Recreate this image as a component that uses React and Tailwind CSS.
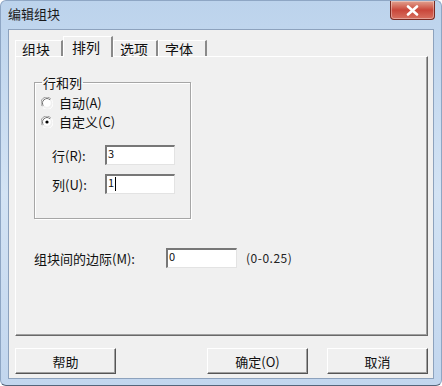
import React from 'react';

const font = { fontFamily: '"Noto Sans CJK SC", "Liberation Sans", sans-serif' };

const Radio = ({ checked }) => (
  <svg width="12" height="12" viewBox="0 0 12 12" className="shrink-0">
    <path d="M10 2.2 A5.5 5.5 0 0 0 1.2 9.2" fill="none" stroke="#a0a0a0" strokeWidth="1" />
    <path d="M9 2.8 A4.5 4.5 0 0 0 2.2 8.6" fill="none" stroke="#696969" strokeWidth="1" />
    <path d="M10.4 2.6 A5.5 5.5 0 0 1 2 10.6" fill="none" stroke="#ffffff" strokeWidth="1" />
    <circle cx="6" cy="6" r="3.8" fill="#ffffff" />
    {checked && <circle cx="6" cy="6" r="1.6" fill="#000000" />}
  </svg>
);

const Field = ({ value, caret, className }) => (
  <div
    className={
      'h-[20px] bg-white border-t-2 border-l-2 border-t-[#777] border-l-[#777] border-b border-r border-b-[#e3e3e3] border-r-[#e3e3e3] text-[11px] leading-none pl-[1px] pt-[1px] flex items-start ' +
      className
    }
  >
    <span>{value}</span>
    {caret && <span className="w-px h-[14px] bg-black ml-px" />}
  </div>
);

const Button = ({ children, className }) => (
  <button
    className={
      'h-[26px] w-[101px] bg-[#f0f0f0] border border-t-white border-l-white border-b-[#555] border-r-[#555] shadow-[inset_-1px_-1px_0_#a0a0a0] text-[13px] leading-none text-[#111] ' +
      (className || '')
    }
  >
    {children}
  </button>
);

const Tab = ({ label, active, className }) => (
  <div
    className={
      'flex items-center border-t border-l border-t-white border-l-white border-r-2 border-r-[#8a8a8a] bg-[#f0f0f0] text-[14px] leading-none text-[#111] ' +
      (active ? 'h-[21px] -mb-px z-10 pl-[8px] ' : 'h-[16px] pl-[6px] ') +
      (className || '')
    }
  >
    {label}
  </div>
);

export default function App() {
  return (
    <div
      className="w-[442px] h-[386px] flex flex-col bg-gradient-to-b from-[#bcd3ec] via-[#d3e3f4] to-[#c2d6ee] rounded-[6px] border border-[#8ea6c4] border-b-[#55657a] overflow-hidden"
      style={font}
    >
      {/* title bar */}
      <div className="h-[28px] flex items-start shrink-0">
        <div className="pl-[7px] pt-[6px] text-[13px] leading-none text-[#1a1a1a]">编辑组块</div>
        <div className="flex-1" />
        <div className="mr-[6px] w-[45px] h-[19px] rounded-b-[4px] border border-t-0 border-[#7a2a22] bg-gradient-to-b from-[#e0a090] via-[#c9463a] to-[#d87060] flex items-center justify-center shadow-[inset_0_0_0_1px_rgba(255,255,255,0.35)]">
          <svg width="13" height="11" viewBox="0 0 13 11">
            <path d="M2 1.5 L11 9.5 M11 1.5 L2 9.5" stroke="#ffffff" strokeWidth="2.6" strokeLinecap="round" />
          </svg>
        </div>
      </div>

      {/* client area */}
      <div className="flex-1 mx-[7px] mb-[6px] bg-[#f0f0f0] border border-[#8da2bd] flex flex-col">
        {/* tabs */}
        <div className="flex items-end h-[26px] pl-[6px] pt-[6px]">
          <Tab label="组块" className="w-[48px]" />
          <Tab label="排列" active className="w-[50px]" />
          <Tab label="选项" className="w-[45px]" />
          <Tab label="字体" className="w-[49px]" />
        </div>

        {/* panel */}
        <div className="ml-[6px] mr-[5px] h-[280px] border border-t-white border-l-white border-b-[#696969] border-r-[#696969] shadow-[inset_-1px_-1px_0_#a0a0a0] flex flex-col pl-[18px] pt-[19px] text-[13px] text-[#111]">
          <fieldset className="w-[157px] h-[143px] border border-[#a6a6a6] shadow-[1px_1px_0_white,inset_1px_1px_0_white] px-[6px]">
            <legend className="px-[1px] ml-[1px] leading-none text-[13px]">行和列</legend>
            <div className="flex items-center gap-[6px] mt-[7px] leading-none">
              <Radio />
              <span>自动(A)</span>
            </div>
            <div className="flex items-center gap-[6px] mt-[6px] leading-none">
              <Radio checked />
              <span>自定义(C)</span>
            </div>
            <div className="flex items-center mt-[17px] pl-[11px]">
              <span className="w-[53px] leading-none">行(R):</span>
              <Field value="3" className="w-[70px]" />
            </div>
            <div className="flex items-center mt-[9px] pl-[11px]">
              <span className="w-[53px] leading-none">列(U):</span>
              <Field value="1" caret className="w-[70px]" />
            </div>
          </fieldset>

          <div className="flex items-center mt-[29px]">
            <span className="w-[132px] leading-none">组块间的边际(M):</span>
            <Field value="0" className="w-[71px]" />
            <span className="ml-[9px] text-[12px] tracking-[0.5px] leading-none text-[#222]">(0-0.25)</span>
          </div>
        </div>

        {/* buttons */}
        <div className="flex mt-[12px] pl-[6px] pr-[5px]">
          <Button>帮助</Button>
          <div className="flex-1" />
          <Button className="mr-[19px]">确定(O)</Button>
          <Button>取消</Button>
        </div>
      </div>
    </div>
  );
}
